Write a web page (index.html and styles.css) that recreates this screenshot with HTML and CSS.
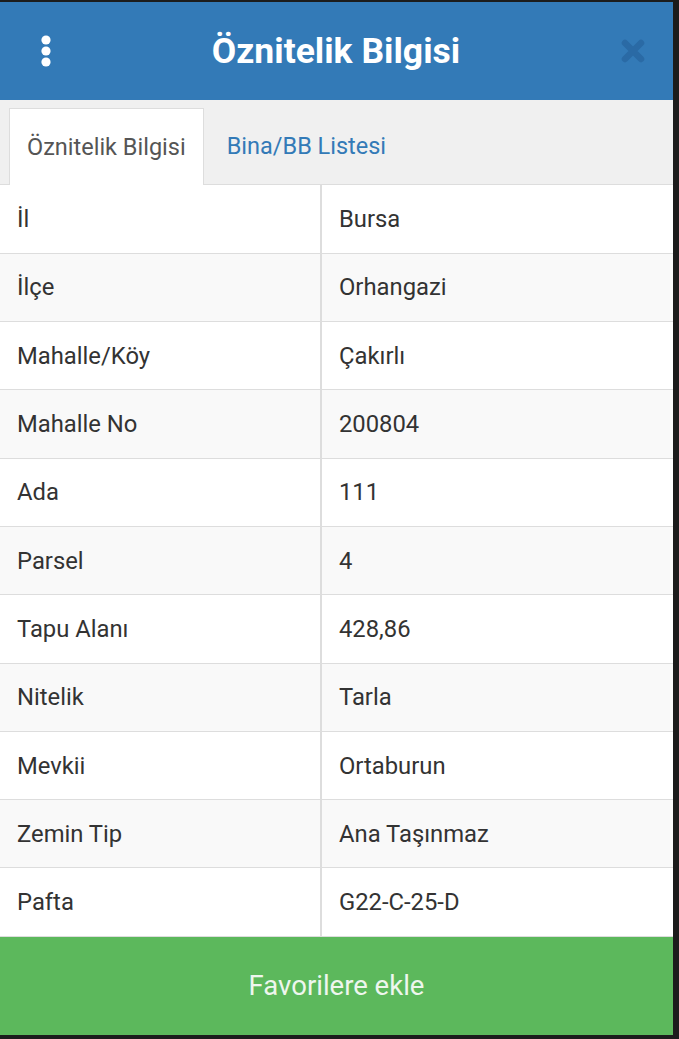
FILE: index.html
```html
<!DOCTYPE html>
<html lang="tr">
<head>
    <meta charset="UTF-8">
    <meta name="viewport" content="width=device-width, initial-scale=1.0">
    <title>Öznitelik Bilgisi</title>
    <link rel="stylesheet" href="styles.css">
</head>
<body>
    <div id="panel">
        <div class="header">
            <span class="menu">
                <svg width="12" height="34" viewBox="0 0 12 34">
                    <circle cx="6" cy="6" r="4.6" fill="#fff"/>
                    <circle cx="6" cy="17" r="4.6" fill="#fff"/>
                    <circle cx="6" cy="28" r="4.6" fill="#fff"/>
                </svg>
            </span>
            <h1 class="title">Öznitelik Bilgisi</h1>
            <span class="close">
                <svg width="26" height="26" viewBox="0 0 26 26">
                    <path d="M5 5 L21 21 M21 5 L5 21" stroke="#2a6aa5" stroke-width="6.5" stroke-linecap="round"/>
                </svg>
            </span>
        </div>

        <div class="tabs">
            <div class="tab active">Öznitelik Bilgisi</div>
            <div class="tab">Bina/BB Listesi</div>
        </div>

        <table class="info">
            <tr><td>İl</td><td>Bursa</td></tr>
            <tr><td>İlçe</td><td>Orhangazi</td></tr>
            <tr><td>Mahalle/Köy</td><td>Çakırlı</td></tr>
            <tr><td>Mahalle No</td><td>200804</td></tr>
            <tr><td>Ada</td><td>111</td></tr>
            <tr><td>Parsel</td><td>4</td></tr>
            <tr><td>Tapu Alanı</td><td>428,86</td></tr>
            <tr><td>Nitelik</td><td>Tarla</td></tr>
            <tr><td>Mevkii</td><td>Ortaburun</td></tr>
            <tr><td>Zemin Tip</td><td>Ana Taşınmaz</td></tr>
            <tr><td>Pafta</td><td>G22-C-25-D</td></tr>
        </table>

        <div class="btn-fav">Favorilere ekle</div>
    </div>
</body>
</html>
```

FILE: styles.css
```css
html, body {
    margin: 0;
    padding: 0;
}

body {
    background-color: #1c1c1c;
    font-family: Roboto, "Noto Sans", sans-serif;
    color: #333;
}

#panel {
    width: 673px;
    margin-top: 2px;
    background-color: #fff;
}

.header {
    height: 98px;
    background-color: #337ab7;
    display: flex;
    align-items: center;
    justify-content: space-between;
    padding: 0 27px 0 40px;
    box-sizing: border-box;
}

.menu, .close {
    display: flex;
    align-items: center;
}

.title {
    margin: 0;
    color: #fff;
    font-size: 35.5px;
    font-weight: bold;
}

.tabs {
    display: flex;
    background-color: #f0f0f0;
    padding: 8px 0 0 9px;
    border-bottom: 1px solid #ddd;
    height: 85px;
    box-sizing: border-box;
}

.tab {
    padding: 0 23px;
    display: flex;
    align-items: center;
    font-size: 23.5px;
    color: #337ab7;
    height: 76px;
}

.tab.active {
    color: #555;
    background-color: #fff;
    border: 1px solid #ddd;
    border-bottom: none;
    padding: 0 17px;
}

.info {
    width: 100%;
    border-collapse: collapse;
    font-size: 23.8px;
}

.info td {
    height: 68.3px;
    box-sizing: border-box;
    border-bottom: 1px solid #ddd;
    padding: 0 0 0 17px;
}

.info td:first-child {
    width: 321px;
    border-right: 2px solid #ddd;
}

.info tr:nth-child(even) td {
    background-color: #f9f9f9;
}

.btn-fav {
    height: 98px;
    background-color: #5cb85c;
    color: #eef6ee;
    font-size: 27.5px;
    display: flex;
    align-items: center;
    justify-content: center;
}
```
